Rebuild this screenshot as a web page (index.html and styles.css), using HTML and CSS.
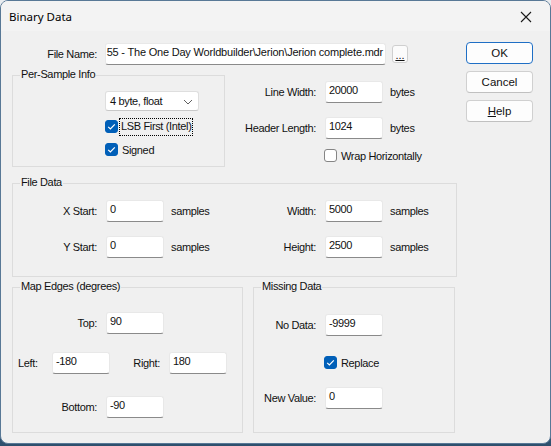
FILE: index.html
```html
<!DOCTYPE html>
<html>
<head>
<meta charset="utf-8">
<link rel="stylesheet" href="styles.css">
</head>
<body>
<div class="window">
  <div class="titlebar">
    <span class="title">Binary Data</span>
    <svg class="close" width="12" height="12" viewBox="0 0 12 12"><path d="M1 1 L11 11 M11 1 L1 11" stroke="#1a1a1a" stroke-width="1.1" fill="none"/></svg>
  </div>
  <div class="content">
    <div class="left">
      <div class="file-row">
        <span class="lbl w85">File Name:</span>
        <div class="edit file-edit"><span>55 - The One Day Worldbuilder\Jerion\Jerion complete.mdr</span></div>
        <div class="browse"><u>...</u></div>
      </div>

      <div class="sec2">
        <div class="group ps">
          <span class="gtitle">Per-Sample Info</span>
          <div class="combo"><span>4 byte, float</span>
            <svg class="chev" width="10" height="6" viewBox="0 0 10 6"><path d="M1 1 L5 5 L9 1" stroke="#606060" stroke-width="1" fill="none"/></svg>
          </div>
          <div class="check-row r1"><span class="cb on"><svg width="13" height="13" viewBox="0 0 13 13"><path d="M3.2 6.8 L5.4 9 L9.8 4.4" stroke="#fff" stroke-width="1.2" fill="none"/></svg></span><span class="focus">LSB First (Intel)</span></div>
          <div class="check-row r2"><span class="cb on"><svg width="13" height="13" viewBox="0 0 13 13"><path d="M3.2 6.8 L5.4 9 L9.8 4.4" stroke="#fff" stroke-width="1.2" fill="none"/></svg></span><span class="cl">Signed</span></div>
        </div>
        <div class="fields">
          <div class="frow"><span class="lbl w91">Line Width:</span><div class="edit e58">20000</div><span class="unit">bytes</span></div>
          <div class="frow f2"><span class="lbl w91">Header Length:</span><div class="edit e58">1024</div><span class="unit">bytes</span></div>
          <div class="check-row wrap"><span class="cb"></span><span class="cl">Wrap Horizontally</span></div>
        </div>
      </div>

      <div class="group fd">
        <span class="gtitle">File Data</span>
        <div class="frow">
          <span class="lbl w84">X Start:</span><div class="edit e58">0</div><span class="unit u60">samples</span>
          <span class="lbl w84b">Width:</span><div class="edit e58">5000</div><span class="unit">samples</span>
        </div>
        <div class="frow f2">
          <span class="lbl w84">Y Start:</span><div class="edit e58">0</div><span class="unit u60">samples</span>
          <span class="lbl w84b">Height:</span><div class="edit e58">2500</div><span class="unit">samples</span>
        </div>
      </div>

      <div class="bottom">
        <div class="group me">
          <span class="gtitle">Map Edges (degrees)</span>
          <div class="frow top"><span class="lbl w84">Top:</span><div class="edit e58">90</div></div>
          <div class="frow lr">
            <span class="lbl lft">Left:</span><div class="edit e58">-180</div>
            <span class="lbl w50">Right:</span><div class="edit e58">180</div>
          </div>
          <div class="frow bot"><span class="lbl w84">Bottom:</span><div class="edit e58">-90</div></div>
        </div>
        <div class="group md">
          <span class="gtitle">Missing Data</span>
          <div class="frow nd"><span class="lbl w62">No Data:</span><div class="edit e58">-9999</div></div>
          <div class="check-row rep"><span class="cb on"><svg width="13" height="13" viewBox="0 0 13 13"><path d="M3.2 6.8 L5.4 9 L9.8 4.4" stroke="#fff" stroke-width="1.2" fill="none"/></svg></span><span class="cl">Replace</span></div>
          <div class="frow nv"><span class="lbl w62">New Value:</span><div class="edit e58">0</div></div>
        </div>
      </div>
    </div>

    <div class="right">
      <div class="btn default">OK</div>
      <div class="btn">Cancel</div>
      <div class="btn"><u>H</u>elp</div>
    </div>
  </div>
</div>
</body>
</html>
```

FILE: styles.css
```css
html, body {
  margin: 0;
  padding: 0;
}
body {
  width: 551px;
  height: 446px;
  overflow: hidden;
  background: linear-gradient(to bottom, #e9ecef 0, #e9ecef 200px, #3a5d7d 420px, #2e4f6c 446px);
  font-family: "Liberation Sans", Arial, sans-serif;
  font-size: 11px;
  letter-spacing: -0.35px;
  color: #111;
}
.window {
  box-sizing: border-box;
  width: 551px;
  height: 444px;
  border: 1px solid #587896;
  border-radius: 8px;
  background: #f0f0f0;
  overflow: hidden;
}
.titlebar {
  height: 30px;
  background: #f3f3f3;
  display: flex;
  align-items: center;
  justify-content: space-between;
  padding: 0 18px 0 8px;
}
.title {
  font-family: "Noto Sans", "Open Sans", sans-serif;
  font-size: 11.5px;
  letter-spacing: 0;
  color: #000;
  margin-top: 1px;
}
.close {
  margin-top: 1px;
}
.content {
  display: flex;
  padding-left: 11px;
}
.left {
  width: 445px;
  display: flex;
  flex-direction: column;
}
.right {
  margin-left: 9px;
  padding-top: 11px;
  display: flex;
  flex-direction: column;
  gap: 7px;
}
.btn {
  box-sizing: border-box;
  width: 67px;
  height: 22px;
  background: #fdfdfd;
  border: 1px solid #d0d0d0;
  border-bottom-color: #c0c0c0;
  border-radius: 4px;
  display: flex;
  align-items: center;
  justify-content: center;
  letter-spacing: 0;
  font-size: 11.5px;
}
.btn.default {
  border: 1px solid #1f6fc5;
}
.lbl {
  display: inline-block;
  text-align: right;
  white-space: nowrap;
  flex: none;
}
.w85 { width: 85px; }
.w91 { width: 91px; }
.w84 { width: 84px; }
.w84b { width: 85px; }
.w62 { width: 62px; }
.w50 { width: 50px; }
.edit {
  box-sizing: border-box;
  height: 22px;
  background: #fff;
  border: 1px solid #e8e8e8;
  border-bottom: 1px solid #8a8a8a;
  border-radius: 3px;
  padding: 2px 0 0 3px;
  line-height: 13px;
  white-space: nowrap;
  overflow: hidden;
  flex: none;
  margin-left: 9px;
}
.e58 { width: 58px; }
.unit {
  margin-left: 7px;
  flex: none;
}
.u60 { width: 60px; }
.file-row {
  margin-top: 12px;
  height: 22px;
  display: flex;
  align-items: center;
}
.file-edit {
  width: 281px;
  margin-left: 8px;
  letter-spacing: -0.2px;
  display: flex;
  justify-content: flex-end;
  padding: 2px 2px 0 0;
}
.file-edit span {
  flex: none;
}
.browse {
  box-sizing: border-box;
  width: 16px;
  height: 18px;
  margin-left: 6px;
  border: 1px solid #cfcfcf;
  border-radius: 3px;
  background: #fbfbfb;
  display: flex;
  align-items: flex-end;
  justify-content: center;
  line-height: 12px;
  padding-bottom: 1px;
  letter-spacing: 0;
}
.sec2 {
  margin-top: 10px;
  display: flex;
}
.group {
  box-sizing: border-box;
  position: relative;
  border: 1px solid #dcdcdc;
  flex: none;
}
.gtitle {
  position: absolute;
  top: -8px;
  left: 7px;
  padding: 0 1px;
  background: #f0f0f0;
  line-height: 13px;
  white-space: nowrap;
}
.ps {
  width: 213px;
  height: 92px;
  padding: 15px 0 0 92px;
}
.combo {
  box-sizing: border-box;
  width: 94px;
  height: 20px;
  background: #fff;
  border: 1px solid #dedede;
  border-bottom-color: #c8c8c8;
  border-radius: 3px;
  display: flex;
  align-items: center;
  justify-content: space-between;
  padding: 0 5px 0 4px;
}
.chev { margin-top: 1px; }
.check-row {
  height: 17px;
  display: flex;
  align-items: center;
}
.r1 { margin-top: 7px; }
.r2 { margin-top: 6px; }
.cb {
  box-sizing: border-box;
  width: 13px;
  height: 13px;
  border-radius: 3px;
  border: 1px solid #858585;
  background: #fff;
  flex: none;
  display: block;
  position: relative;
}
.cb.on {
  background: #005fb8;
  border-color: #005fb8;
}
.cb svg {
  position: absolute;
  left: -1px;
  top: -1px;
}
.cl {
  margin-left: 4px;
}
.focus {
  margin-left: 2px;
  padding: 1px 1px 2px 1px;
  outline: 1px dotted #000;
  line-height: 13px;
}
.fields {
  padding-top: 6px;
  display: flex;
  flex-direction: column;
}
.frow {
  height: 22px;
  display: flex;
  align-items: center;
}
.f2 { margin-top: 14px; }
.wrap {
  margin-top: 8px;
  padding-left: 99px;
}
.fd {
  margin-top: 16px;
  width: 445px;
  height: 94px;
  padding-top: 16px;
}
.bottom {
  margin-top: 10px;
  display: flex;
  gap: 10px;
}
.me {
  width: 231px;
  height: 146px;
  padding-top: 24px;
}
.lr { margin-top: 18px; }
.bot { margin-top: 22px; }
.lft {
  margin-left: 5px;
  width: 25px;
  text-align: left;
}
.md {
  width: 202px;
  height: 146px;
  padding-top: 26px;
}
.rep {
  margin-top: 18px;
  padding-left: 70px;
}
.nv { margin-top: 16px; }
```
